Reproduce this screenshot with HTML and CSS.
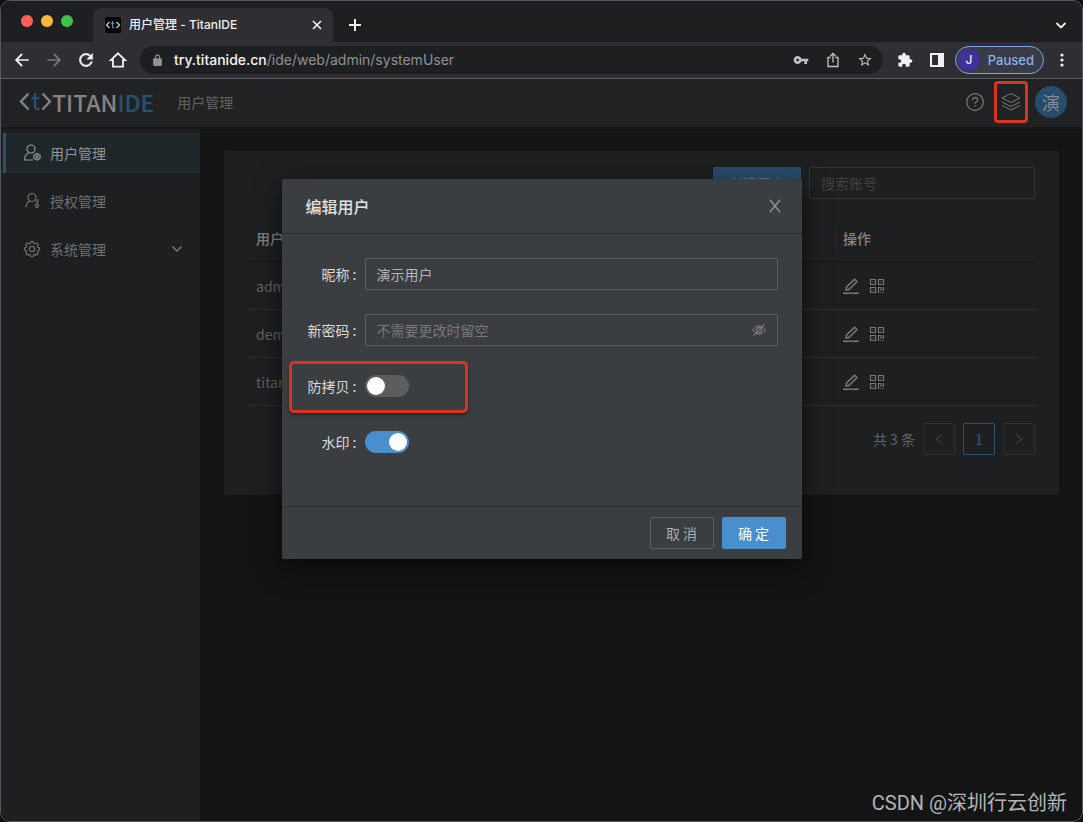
FILE: index.html
```html
<!DOCTYPE html>
<html lang="zh-CN">
<head>
<meta charset="utf-8">
<title>用户管理 - TitanIDE</title>
<link rel="stylesheet" href="styles.css">
</head>
<body>
<svg class="sprite" aria-hidden="true">
  <symbol id="edit" viewBox="112 108 800 800"><path fill="currentColor" d="M257.7 752c2 0 4-.2 6-.5L431.9 722c2-.4 3.9-1.3 5.3-2.8l423.9-423.9a9.96 9.96 0 000-14.1L694.9 114.9c-1.9-1.9-4.4-2.9-7.1-2.9s-5.2 1-7.1 2.9L256.8 538.8c-1.5 1.5-2.4 3.3-2.8 5.3l-29.5 168.2a33.5 33.5 0 009.4 29.8c6.6 6.4 14.9 9.9 23.8 9.9zm67.4-174.4L687.8 215l73.3 73.3-362.7 362.6-88.9 15.7 15.6-89zM880 836H144c-17.7 0-32 14.3-32 32v36c0 4.4 3.6 8 8 8h784c4.4 0 8-3.6 8-8v-36c0-17.7-14.3-32-32-32z"/></symbol>
  <symbol id="qr" viewBox="0 0 16 16"><g fill="none" stroke="currentColor" stroke-width="1.200"><path d="M1.500 1.500h5v5h-5zM9.500 1.500h5v5h-5zM1.500 9.500h5v5h-5z"/><path d="M9.500 15V9.500h2.500v2.500h2.500V9"/></g><path fill="currentColor" d="M3.500 3.500h1v1h-1zM11.500 3.500h1v1h-1zM3.500 11.500h1v1h-1zM11.500 14h1v1h-1zM14 14h1v1h-1z"/></symbol>
</svg>
<div class="window">
  <div class="tabstrip">
    <div class="lights"><i class="red"></i><i class="yellow"></i><i class="green"></i></div>
    <div class="tab">
      <svg class="favicon" viewBox="0 0 16 16"><rect width="16" height="16" rx="2" fill="#050505"/><g fill="none" stroke-width="1.200"><path d="M4.500 5L1.500 8l3 3M11.500 5l3 3-3 3" stroke="#d5d0c8"/><path d="M7.500 4v5.500q0 1.500 2 1.200M6 6.500h3.500" stroke="#4b93cf"/></g></svg>
      <span class="tab-title">用户管理 - TitanIDE</span>
      <button class="tab-close" aria-label="关闭标签页"><svg viewBox="0 0 16 16"><path d="M4 4l8 8M12 4l-8 8" fill="none" stroke="currentColor" stroke-width="1.700"/></svg></button>
    </div>
    <button class="newtab" aria-label="新标签页"><svg viewBox="0 0 16 16"><path d="M8 2v12M2 8h12" fill="none" stroke="currentColor" stroke-width="2"/></svg></button>
    <button class="tabmenu" aria-label="搜索标签页"><svg viewBox="0 0 16 16"><path d="M3.500 6L8 10.500 12.500 6" fill="none" stroke="currentColor" stroke-width="1.800"/></svg></button>
  </div>
  <div class="toolbar">
    <button class="tool" aria-label="后退"><svg viewBox="0 0 24 24"><path fill="currentColor" d="M20 11H7.500l5.400-5.500L11.300 4 3.500 12l7.800 8 1.600-1.500L7.500 13H20z"/></svg></button>
    <button class="tool dim" aria-label="前进"><svg viewBox="0 0 24 24"><path fill="currentColor" d="M4 11h12.500l-5.400-5.500L12.700 4l7.800 8-7.800 8-1.600-1.500 5.400-5.500H4z"/></svg></button>
    <button class="tool" aria-label="重新加载"><svg viewBox="0 0 24 24"><path fill="currentColor" stroke="currentColor" stroke-width=".5" d="M17.650 6.350C16.200 4.900 14.210 4 12 4c-4.420 0-7.990 3.580-7.990 8s3.570 8 7.990 8c3.730 0 6.840-2.550 7.730-6h-2.080c-.82 2.330-3.040 4-5.650 4-3.310 0-6-2.690-6-6s2.690-6 6-6c1.660 0 3.140.69 4.220 1.780L13 11h7V4z"/></svg></button>
    <button class="tool" aria-label="主页"><svg viewBox="0 0 24 24"><path d="M12 4l8.500 8.200H18V20H6v-7.800H3.500z" fill="none" stroke="currentColor" stroke-width="2.200"/></svg></button>
    <div class="address">
      <svg class="lock" viewBox="0 0 24 24"><path fill="currentColor" d="M18 8h-1V6c0-2.760-2.240-5-5-5S7 3.240 7 6v2H6c-1.100 0-2 .9-2 2v10c0 1.100.9 2 2 2h12c1.100 0 2-.9 2-2V10c0-1.100-.9-2-2-2zM9 6c0-1.660 1.340-3 3-3s3 1.340 3 3v2H9z"/></svg>
      <div class="url" role="textbox" aria-label="地址"><b>try.titanide.cn</b>/ide/web/admin/systemUser</div>
      <button class="tool small" aria-label="密码"><svg viewBox="0 0 24 24"><path fill="currentColor" d="M12.650 10C11.830 7.670 9.610 6 7 6c-3.310 0-6 2.690-6 6s2.690 6 6 6c2.610 0 4.830-1.670 5.650-4H17v4h4v-4h2v-4zM7 14c-1.100 0-2-.9-2-2s.9-2 2-2 2 .9 2 2-.9 2-2 2z"/></svg></button>
      <button class="tool small" aria-label="分享"><svg viewBox="0 0 16 16"><path d="M5.500 5.500H3v9h10v-9h-2.500M8 10.500V1.500M5.200 4.200L8 1.400l2.800 2.800" fill="none" stroke="currentColor" stroke-width="1.300"/></svg></button>
      <button class="tool small" aria-label="收藏"><svg viewBox="0 0 24 24"><path fill="currentColor" d="M22 9.240l-7.190-.62L12 2 9.190 8.630 2 9.240l5.460 4.730L5.820 21 12 17.270 18.180 21l-1.630-7.030zM12 15.400l-3.760 2.270 1-4.280-3.320-2.880 4.380-.38L12 6.100l1.710 4.040 4.380.38-3.320 2.880 1 4.280z"/></svg></button>
    </div>
    <button class="tool mid" aria-label="扩展程序"><svg viewBox="0 0 24 24"><path fill="currentColor" d="M20.500 11H19V7c0-1.100-.9-2-2-2h-4V3.500C13 2.120 11.880 1 10.500 1S8 2.120 8 3.500V5H4c-1.100 0-1.990.9-1.990 2v3.800H3.500c1.490 0 2.700 1.210 2.700 2.700s-1.210 2.700-2.700 2.700H2V20c0 1.100.9 2 2 2h3.800v-1.500c0-1.490 1.210-2.700 2.700-2.700s2.700 1.210 2.700 2.700V22H17c1.100 0 2-.9 2-2v-4h1.500c1.380 0 2.500-1.120 2.500-2.500S21.880 11 20.500 11z"/></svg></button>
    <button class="tool mid" aria-label="侧边栏"><svg viewBox="0 0 16 16"><path fill="currentColor" fill-rule="evenodd" d="M1 1h14v14H1zM3 3v10h6V3z"/></svg></button>
    <button class="profile"><span class="initial">J</span><span>Paused</span></button>
    <button class="tool mid" aria-label="更多"><svg viewBox="0 0 16 16"><g fill="currentColor"><circle cx="8" cy="3" r="1.600"/><circle cx="8" cy="8" r="1.600"/><circle cx="8" cy="13" r="1.600"/></g></svg></button>
  </div>

  <div class="app">
    <header class="appbar">
      <a class="logo" href="#"><svg viewBox="0 0 34 24"><g fill="none" stroke-width="2.400"><path d="M10.500 3.500L3 11.500l7.500 8M24.500 3.500l7.500 8-7.500 8" stroke="#858382"/><path d="M17 3v13q0 3.600 4.500 2.800M13.500 8h8" stroke="#28506f"/></g></svg><span class="logo-titan">TITAN</span><span class="logo-ide">IDE</span></a>
      <span class="crumb">用户管理</span>
      <button class="icon-btn" aria-label="帮助"><svg viewBox="0 0 20 20" fill="none" stroke="currentColor" stroke-width="1.300"><circle cx="10" cy="10" r="8.300"/><path d="M7.500 8.200c0-3.600 5.200-3.400 5.200-.4 0 2-2.700 2-2.700 4M10 13.300v1.400"/></svg></button>
      <button class="icon-btn layers" aria-label="工作空间"><svg viewBox="0 0 20 20" fill="none" stroke="currentColor"><path d="M10 1.500l9 4.500-9 4.500L1 6zM1 10l9 4.500 9-4.500M1 13.500L10 18l9-4.500"/></svg></button>
      <button class="avatar">演</button>
    </header>
    <div class="columns">
      <nav class="sidebar">
        <a class="item active" href="#"><svg viewBox="0 0 18 18" fill="none" stroke="currentColor" stroke-width="1.200"><circle cx="8" cy="5" r="4"/><path d="M10 16H1.500c0-3.500 1.500-6 4.200-7.200M14 9.500l3 1.600v3.200l-3 1.700-3-1.700v-3.200z"/><circle cx="14" cy="12.700" r="1"/></svg><span>用户管理</span></a>
        <a class="item" href="#"><svg viewBox="0 0 18 18" fill="none" stroke="currentColor" stroke-width="1.200"><circle cx="9" cy="5.500" r="4"/><path d="M3 15.500c0-3.500 1.500-5.500 4-6.500M14 12V8h2M14 10h1.500"/><circle cx="14" cy="13.800" r="1.600"/></svg><span>授权管理</span></a>
        <a class="item" href="#"><svg viewBox="0 0 18 18" fill="none" stroke="currentColor" stroke-width="1.200"><circle cx="9" cy="9" r="2.700"/><path stroke-linejoin="round" d="M7.300 3.200L8 1.500h2l.7 1.700 1.300.5 1.700-.7 1.400 1.400-.7 1.600.5 1.300 1.600.7v2l-1.600.7-.5 1.300.7 1.700-1.400 1.400-1.700-.7-1.300.5-.7 1.600H8l-.7-1.600-1.300-.5-1.700.7-1.400-1.400.7-1.700-.5-1.300L1.500 10V8l1.600-.7.5-1.300-.7-1.600L4.300 3l1.700.7z"/></svg><span>系统管理</span><svg class="chevron" viewBox="0 0 12 12"><path d="M1.500 3.500L6 8l4.500-4.500" fill="none" stroke="currentColor" stroke-width="1.700"/></svg></a>
      </nav>
      <main class="content">
        <section class="card">
          <div class="actions">
            <button class="create">创建用户</button>
            <input class="search" type="text" aria-label="搜索账号" placeholder="搜索账号">
          </div>
          <table class="users">
            <thead><tr><th>用户名</th><th class="ops">操作</th></tr></thead>
            <tbody>
              <tr><td>admin</td><td><div class="row-ops"><button aria-label="编辑"><svg><use href="#edit"/></svg></button><button aria-label="二维码"><svg><use href="#qr"/></svg></button></div></td></tr>
              <tr><td>demo</td><td><div class="row-ops"><button aria-label="编辑"><svg><use href="#edit"/></svg></button><button aria-label="二维码"><svg><use href="#qr"/></svg></button></div></td></tr>
              <tr><td>titan</td><td><div class="row-ops"><button aria-label="编辑"><svg><use href="#edit"/></svg></button><button aria-label="二维码"><svg><use href="#qr"/></svg></button></div></td></tr>
            </tbody>
          </table>
          <div class="pager">
            <span>共 3 条</span>
            <button aria-label="上一页"><svg viewBox="0 0 12 12"><path d="M9 1.500L3 6l6 4.500" fill="none" stroke="currentColor"/></svg></button>
            <button class="current">1</button>
            <button aria-label="下一页"><svg viewBox="0 0 12 12"><path d="M3 1.500L9 6l-6 4.500" fill="none" stroke="currentColor"/></svg></button>
          </div>
        </section>
      </main>
    </div>

    <div class="overlay">
      <form class="modal" role="dialog" aria-labelledby="dlg-title">
        <div class="modal-head"><h2 id="dlg-title">编辑用户</h2><button type="button" class="close" aria-label="关闭"><svg viewBox="0 0 16 16"><path d="M3 2l10 12M13 2L3 14" fill="none" stroke="currentColor" stroke-width="1.300"/></svg></button></div>
        <div class="modal-body">
          <div class="field"><label for="nick">昵称 :</label><input id="nick" class="text" type="text" value="演示用户"></div>
          <div class="field"><label for="pwd">新密码 :</label><div class="password"><input id="pwd" class="text" type="password" placeholder="不需要更改时留空"><button type="button" class="eye" aria-label="显示密码"><svg viewBox="0 0 16 16" fill="none" stroke="currentColor"><path d="M1.500 8Q8-.5 14.500 8 8 16.500 1.500 8zM2.500 14L13.500 2"/><circle cx="8" cy="8" r="2.500"/></svg></button></div></div>
          <div class="field marked"><label for="copy">防拷贝 :</label><input id="copy" class="switch" type="checkbox" role="switch"></div>
          <div class="field"><label for="mark">水印 :</label><input id="mark" class="switch" type="checkbox" role="switch" checked></div>
        </div>
        <div class="modal-foot"><button type="button" class="cancel">取 消</button><button type="button" class="ok">确 定</button></div>
      </form>
    </div>
    <div class="watermark">CSDN @深圳行云创新</div>
  </div>
</div>
</body>
</html>
```

FILE: styles.css
```css
*, *::before, *::after { box-sizing: border-box; }
body {
  margin: 0;
  background: #101012;
  font: 14px/22px "Noto Sans CJK SC", sans-serif;
}
button, input { font: inherit; color: inherit; margin: 0; }
button { background: none; border: 0; padding: 0; display: flex; align-items: center; justify-content: center; flex: none; }
a { color: inherit; text-decoration: none; }
svg { display: block; flex: none; }
.sprite { position: absolute; width: 0; height: 0; }

.window {
  min-height: 100vh;
  display: flex;
  flex-direction: column;
  border: 1px solid #55575a;
  border-radius: 10px;
  overflow: hidden;
  background: #141414;
}

/* Browser chrome */
.tabstrip { height: 41px; display: flex; align-items: flex-end; background: #1e1f21; color: #f1f1f2; padding-right: 13px; }
.lights { display: flex; gap: 8px; padding: 0 20px 15px; }
.lights i { width: 12px; height: 12px; border-radius: 50%; }
.red { background: #ff5f57; }
.yellow { background: #fdb63c; }
.green { background: #3fc14a; }
.tab { width: 240px; height: 34px; display: flex; align-items: center; gap: 8px; padding: 0 8px 0 12px; background: #2f2e33; border-radius: 8px 8px 0 0; font: 500 12px/16px Inter, "Noto Sans CJK SC", sans-serif; }
.favicon { width: 16px; height: 16px; }
.tab-title { flex: 1; }
.tab-close svg { width: 16px; height: 16px; }
.newtab { width: 28px; height: 34px; margin-left: 8px; }
.newtab svg { width: 16px; height: 16px; }
.tabmenu { margin-left: auto; height: 34px; }
.tabmenu svg { width: 16px; height: 16px; }

.toolbar { height: 37px; display: flex; align-items: center; padding: 0 4px 0 5px; background: #2f2e33; border-bottom: 1px solid #5b5b5d; color: #f1f1f2; }
.tool { width: 32px; height: 28px; }
.tool svg { width: 20px; height: 20px; }
.tool.dim { color: #77777b; }
.tool.small svg, .tool.mid svg { width: 16px; height: 16px; }
.tool.small { color: #c0c2c5; }
.address { flex: 1; height: 28px; margin: 0 6px; padding: 0 2px 0 11px; display: flex; align-items: center; border-radius: 14px; background: #1e1f21; }
.lock { width: 13px; height: 13px; color: #909296; }
.url { flex: 1; margin-left: 10px; font: 14px/20px Inter, sans-serif; color: #909194; }
.url b { font-weight: 500; color: #f4f4f5; }
.profile { height: 28px; margin: 0 2px; padding: 0 9px 0 2px; gap: 8px; border: 1px solid #7fa6e4; border-radius: 14px; background: #393b46; color: #8ab0ee; font: 500 13px/20px Inter, sans-serif; }
.initial { width: 22px; height: 22px; border-radius: 50%; background: #42309b; color: #f1eefb; line-height: 22px; font-size: 12px; }

/* Application shell */
.app { flex: 1; position: relative; display: flex; flex-direction: column; color: #6f7072; }
.appbar { height: 50px; display: flex; align-items: center; padding: 0 15px 2px 17px; background: #212223; border-bottom: 2px solid #19191a; }
.logo { display: flex; align-items: center; font-size: 23px; line-height: 32px; }
.logo svg { width: 34px; height: 24px; }
.logo-titan { color: #858382; font-weight: 500; }
.logo-ide { color: #28506f; font-weight: 500; }
.crumb { margin: 0 auto 0 23px; color: #616264; }
.icon-btn { width: 34px; height: 42px; color: #77787a; }
.icon-btn svg { width: 20px; height: 20px; }
.layers { position: relative; margin-left: 2px; }
.layers::after { content: ""; position: absolute; inset: 0; border: 3px solid #da3420; border-radius: 4px; }
.avatar { width: 32px; height: 32px; margin-left: 7px; border-radius: 50%; background: #284d6c; color: #85898d; font-size: 18px; }
.columns { flex: 1; display: flex; }
.sidebar { width: 199px; flex: none; padding: 4px 0 0 2px; background: #1e1f20; display: flex; flex-direction: column; gap: 8px; }
.item { height: 40px; display: flex; align-items: center; gap: 9px; padding: 0 17px 0 20px; }
.item svg { width: 18px; height: 18px; }
.item .chevron { width: 12px; height: 12px; margin-left: auto; }
.active { background: #20272b; border-left: 3px solid #2c526f; padding-left: 17px; color: #939698; }
.content { flex: 1; padding: 22px 23px 24px 24px; }

/* User list */
.card { padding: 16px 24px 40px; background: #1e1f20; border-radius: 2px; }
.actions { display: flex; justify-content: flex-end; gap: 8px; }
.create { height: 32px; padding: 0 16px; border-radius: 2px; background: #284d6c; color: #6d8294; }
.search { width: 226px; height: 32px; padding: 0 11px; border: 1px solid #343537; border-radius: 2px; background: transparent; }
.search::placeholder { color: #404143; opacity: 1; }
.users { width: 100%; margin-top: 16px; border-collapse: separate; border-spacing: 0; text-align: left; table-layout: fixed; }
th { height: 47px; padding: 0 8px; color: #838485; font-weight: 500; border-bottom: 1px solid #161718; }
.ops { width: 200px; background: linear-gradient(#292a2b, #292a2b) left center / 1px 22px no-repeat; }
td { height: 48px; padding: 0 8px; border-bottom: 1px solid #2e2f30; color: #616263; }
.row-ops { display: flex; gap: 10px; color: #757678; }
.row-ops svg { width: 16px; height: 16px; }
.pager { display: flex; justify-content: flex-end; align-items: center; gap: 8px; margin-top: 17px; color: #626365; }
.pager button { width: 32px; height: 32px; border: 1px solid #303133; border-radius: 2px; color: #48494b; }
.pager button svg { width: 12px; height: 12px; }
.pager .current { border-color: #2c526f; color: #2c526f; font-weight: 500; }

/* Edit dialog */
.overlay { position: absolute; inset: 0; display: flex; justify-content: center; align-items: flex-start; padding-top: 100px; }
.modal { width: 520px; background: #3b3e40; color: #d9dadb; border-radius: 2px; box-shadow: 0 8px 28px rgba(0, 0, 0, .6); }
.modal-head { display: flex; justify-content: space-between; align-items: center; padding: 16px 19px 16px 24px; border-bottom: 1px solid #282a2c; }
.modal-head h2 { margin: 0; font-size: 16px; line-height: 22px; font-weight: 500; color: #e1e2e2; }
.close { width: 16px; height: 16px; color: #939597; }
.close svg { width: 16px; height: 16px; }
.modal-body { padding: 24px; }
.field { position: relative; display: grid; grid-template-columns: 51px 1fr; column-gap: 8px; align-items: center; height: 32px; margin-bottom: 24px; }
.field label { text-align: right; white-space: nowrap; }
.text { width: 100%; height: 32px; padding: 0 11px; border: 1px solid #5b5d5f; border-radius: 2px; background: transparent; color: #b3b5b6; }
.text::placeholder { color: #76797b; opacity: 1; }
.password { position: relative; }
.eye { position: absolute; right: 11px; top: 8px; width: 16px; height: 16px; color: #8a8c8e; }
.eye svg { width: 16px; height: 16px; }
.switch { appearance: none; position: relative; width: 44px; height: 22px; border-radius: 11px; background: #5d5d5d; }
.switch::before { content: ""; position: absolute; left: 2px; top: 2px; width: 18px; height: 18px; border-radius: 50%; background: #fff; }
.switch:checked { background: #498fce; }
.switch:checked::before { left: auto; right: 2px; }
.marked::after { content: ""; position: absolute; left: -17px; top: -9px; width: 179px; height: 52px; border: 3px solid #da3420; border-radius: 5px; box-shadow: 0 2px 3px rgba(0, 0, 0, .4); pointer-events: none; }
.modal-foot { display: flex; justify-content: flex-end; gap: 8px; padding: 10px 16px; border-top: 1px solid #282a2c; }
.modal-foot button { width: 64px; height: 32px; border-radius: 2px; }
.cancel { border: 1px solid #5b5d5f; color: #a9abac; }
.ok { background: #498fce; color: #fff; }

.watermark { position: absolute; right: 15px; bottom: 6px; font: 20px/24px Roboto, "Noto Sans CJK SC", sans-serif; color: #b4b4b4; }
```
